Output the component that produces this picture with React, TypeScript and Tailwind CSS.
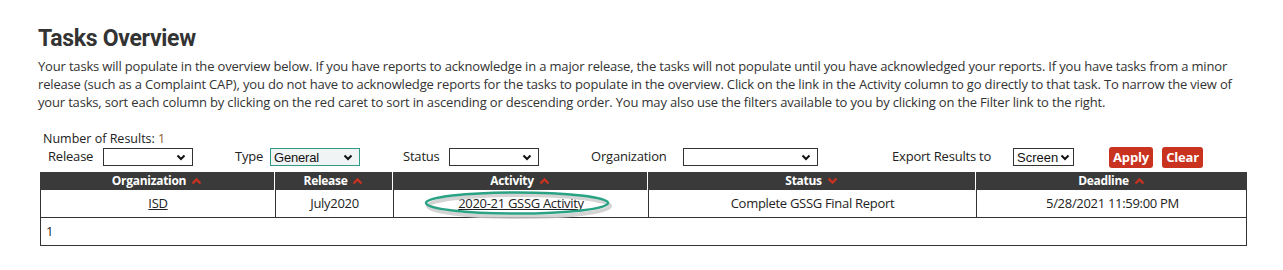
import React from "react";

const Caret = ({ down = false }: { down?: boolean }) => (
  <svg width="11" height="8" viewBox="0 0 11 8" className="inline-block ml-[5px] -mt-[2px]">
    {down ? (
      <path d="M1.5 1.5 L5.5 5.5 L9.5 1.5" fill="none" stroke="#c8321e" strokeWidth="2.4" />
    ) : (
      <path d="M1.5 6.5 L5.5 2.5 L9.5 6.5" fill="none" stroke="#c8321e" strokeWidth="2.4" />
    )}
  </svg>
);

const Chevron = () => (
  <svg width="10" height="7" viewBox="0 0 10 7">
    <path d="M1.5 1.5 L5 5 L8.5 1.5" fill="none" stroke="#111" strokeWidth="2" />
  </svg>
);

const Sel = ({ w, text, green = false }: { w: string; text?: string; green?: boolean }) => (
  <div
    className={`${w} h-[18px] flex items-center justify-between pl-[3px] pr-[6px] border ${
      green ? "border-[#2f9c85] bg-[#f1f4f4]" : "border-[#333] bg-white"
    } text-[13px] leading-none text-[#111]`}
    style={{ fontFamily: "'Liberation Sans', Arial, sans-serif" }}
  >
    <span>{text ?? ""}</span>
    <Chevron />
  </div>
);

export default function App() {
  const cols = "grid grid-cols-[235px_118px_255px_328px_271px]";
  return (
    <div
      className="w-[1283px] h-[270px] bg-white text-[#333] pl-[38px] pt-[24px] relative"
      style={{ fontFamily: "'Open Sans', 'Noto Sans', sans-serif" }}
    >
      <h1
        className="text-[23px] font-bold leading-[30px] text-[#333] tracking-[-0.3px]"
        style={{ fontFamily: "Roboto, 'Open Sans', sans-serif" }}
      >
        Tasks Overview
      </h1>
      <p className="text-[13px] leading-[18px] mt-[3px] w-[1200px] text-[#333] tracking-[-0.17px]">
        Your tasks will populate in the overview below. If you have reports to acknowledge in a major release, the tasks will not populate until you have acknowledged your reports. If you have tasks from a minor release (such as a Complaint CAP), you do not have to acknowledge reports for the tasks to populate in the overview. Click on the link in the Activity column to go directly to that task. To narrow the view of your tasks, sort each column by clicking on the red caret to sort in ascending or descending order. You may also use the filters available to you by clicking on the Filter link to the right.
      </p>

      <div className="mt-[20px] ml-[5px] text-[12.5px] leading-[16px] text-[#222]">
        Number of Results: <span className="text-[#8a5a2b]">1</span>
      </div>

      <div className="flex items-center text-[13px] text-[#222] h-[22px] ml-[10px] -mt-[1px] tracking-[-0.2px]">
        <span className="w-[55px]">Release</span>
        <Sel w="w-[90px]" />
        <span className="ml-[42px] w-[35px]">Type</span>
        <Sel w="w-[90px]" text="General" green />
        <span className="ml-[43px] w-[46px]">Status</span>
        <Sel w="w-[90px]" />
        <span className="ml-[52px] w-[92px]">Organization</span>
        <Sel w="w-[135px]" />
        <span className="ml-[74px] w-[121px]">Export Results to</span>
        <div
          className="w-[61px] h-[18px] flex items-center justify-between pl-[3px] pr-[3px] border border-[#333] text-[13px] leading-none text-[#111] tracking-normal"
          style={{ fontFamily: "'Liberation Sans', Arial, sans-serif" }}
        >
          <span>Screen</span>
          <Chevron />
        </div>
        <button className="ml-[35px] h-[21px] w-[44px] rounded-[3px] bg-[#c8321e] text-white font-bold text-[13px] leading-none">
          Apply
        </button>
        <button className="ml-[9px] h-[21px] w-[41px] rounded-[3px] bg-[#c8321e] text-white font-bold text-[13px] leading-none">
          Clear
        </button>
      </div>

      <div className="ml-[2px] mt-[4px] w-[1207px]">
        <div className={`${cols} bg-[#3a3a3a] h-[18px] text-white font-bold text-[12px] leading-[18px] tracking-[-0.3px]`}>
          <div className="text-center border-r border-white">
            Organization<Caret />
          </div>
          <div className="text-center border-r border-white">
            Release<Caret />
          </div>
          <div className="text-center border-r border-white">
            Activity<Caret />
          </div>
          <div className="text-center border-r border-white">
            Status<Caret down />
          </div>
          <div className="text-center">
            Deadline<Caret />
          </div>
        </div>
        <div className={`${cols} h-[28px] border-x border-b border-[#333] text-[13px] text-[#222] tracking-[-0.3px]`}>
          <div className="flex items-center justify-center border-r border-[#333]">
            <a className="underline">ISD</a>
          </div>
          <div className="flex items-center justify-center border-r border-[#333]">July2020</div>
          <div className="flex items-center justify-center border-r border-[#333] relative">
            <a className="underline">2020-21 GSSG Activity</a>
            <svg
              className="absolute left-[29px] top-[1px] pointer-events-none"
              width="195"
              height="32"
              viewBox="0 0 195 32"
            >
              <ellipse cx="96" cy="15" rx="91" ry="11" fill="none" stroke="#c9c9c9" strokeWidth="4" opacity="0.8" />
              <ellipse cx="94" cy="12" rx="91" ry="10.5" fill="none" stroke="#2aa384" strokeWidth="2.5" />
            </svg>
          </div>
          <div className="flex items-center justify-center border-r border-[#333]">Complete GSSG Final Report</div>
          <div className="flex items-center justify-center">5/28/2021 11:59:00 PM</div>
        </div>
        <div className="h-[28px] border-x border-b border-[#333] text-[13px] text-[#222] flex items-center pl-[5px]">
          1
        </div>
      </div>
    </div>
  );
}
